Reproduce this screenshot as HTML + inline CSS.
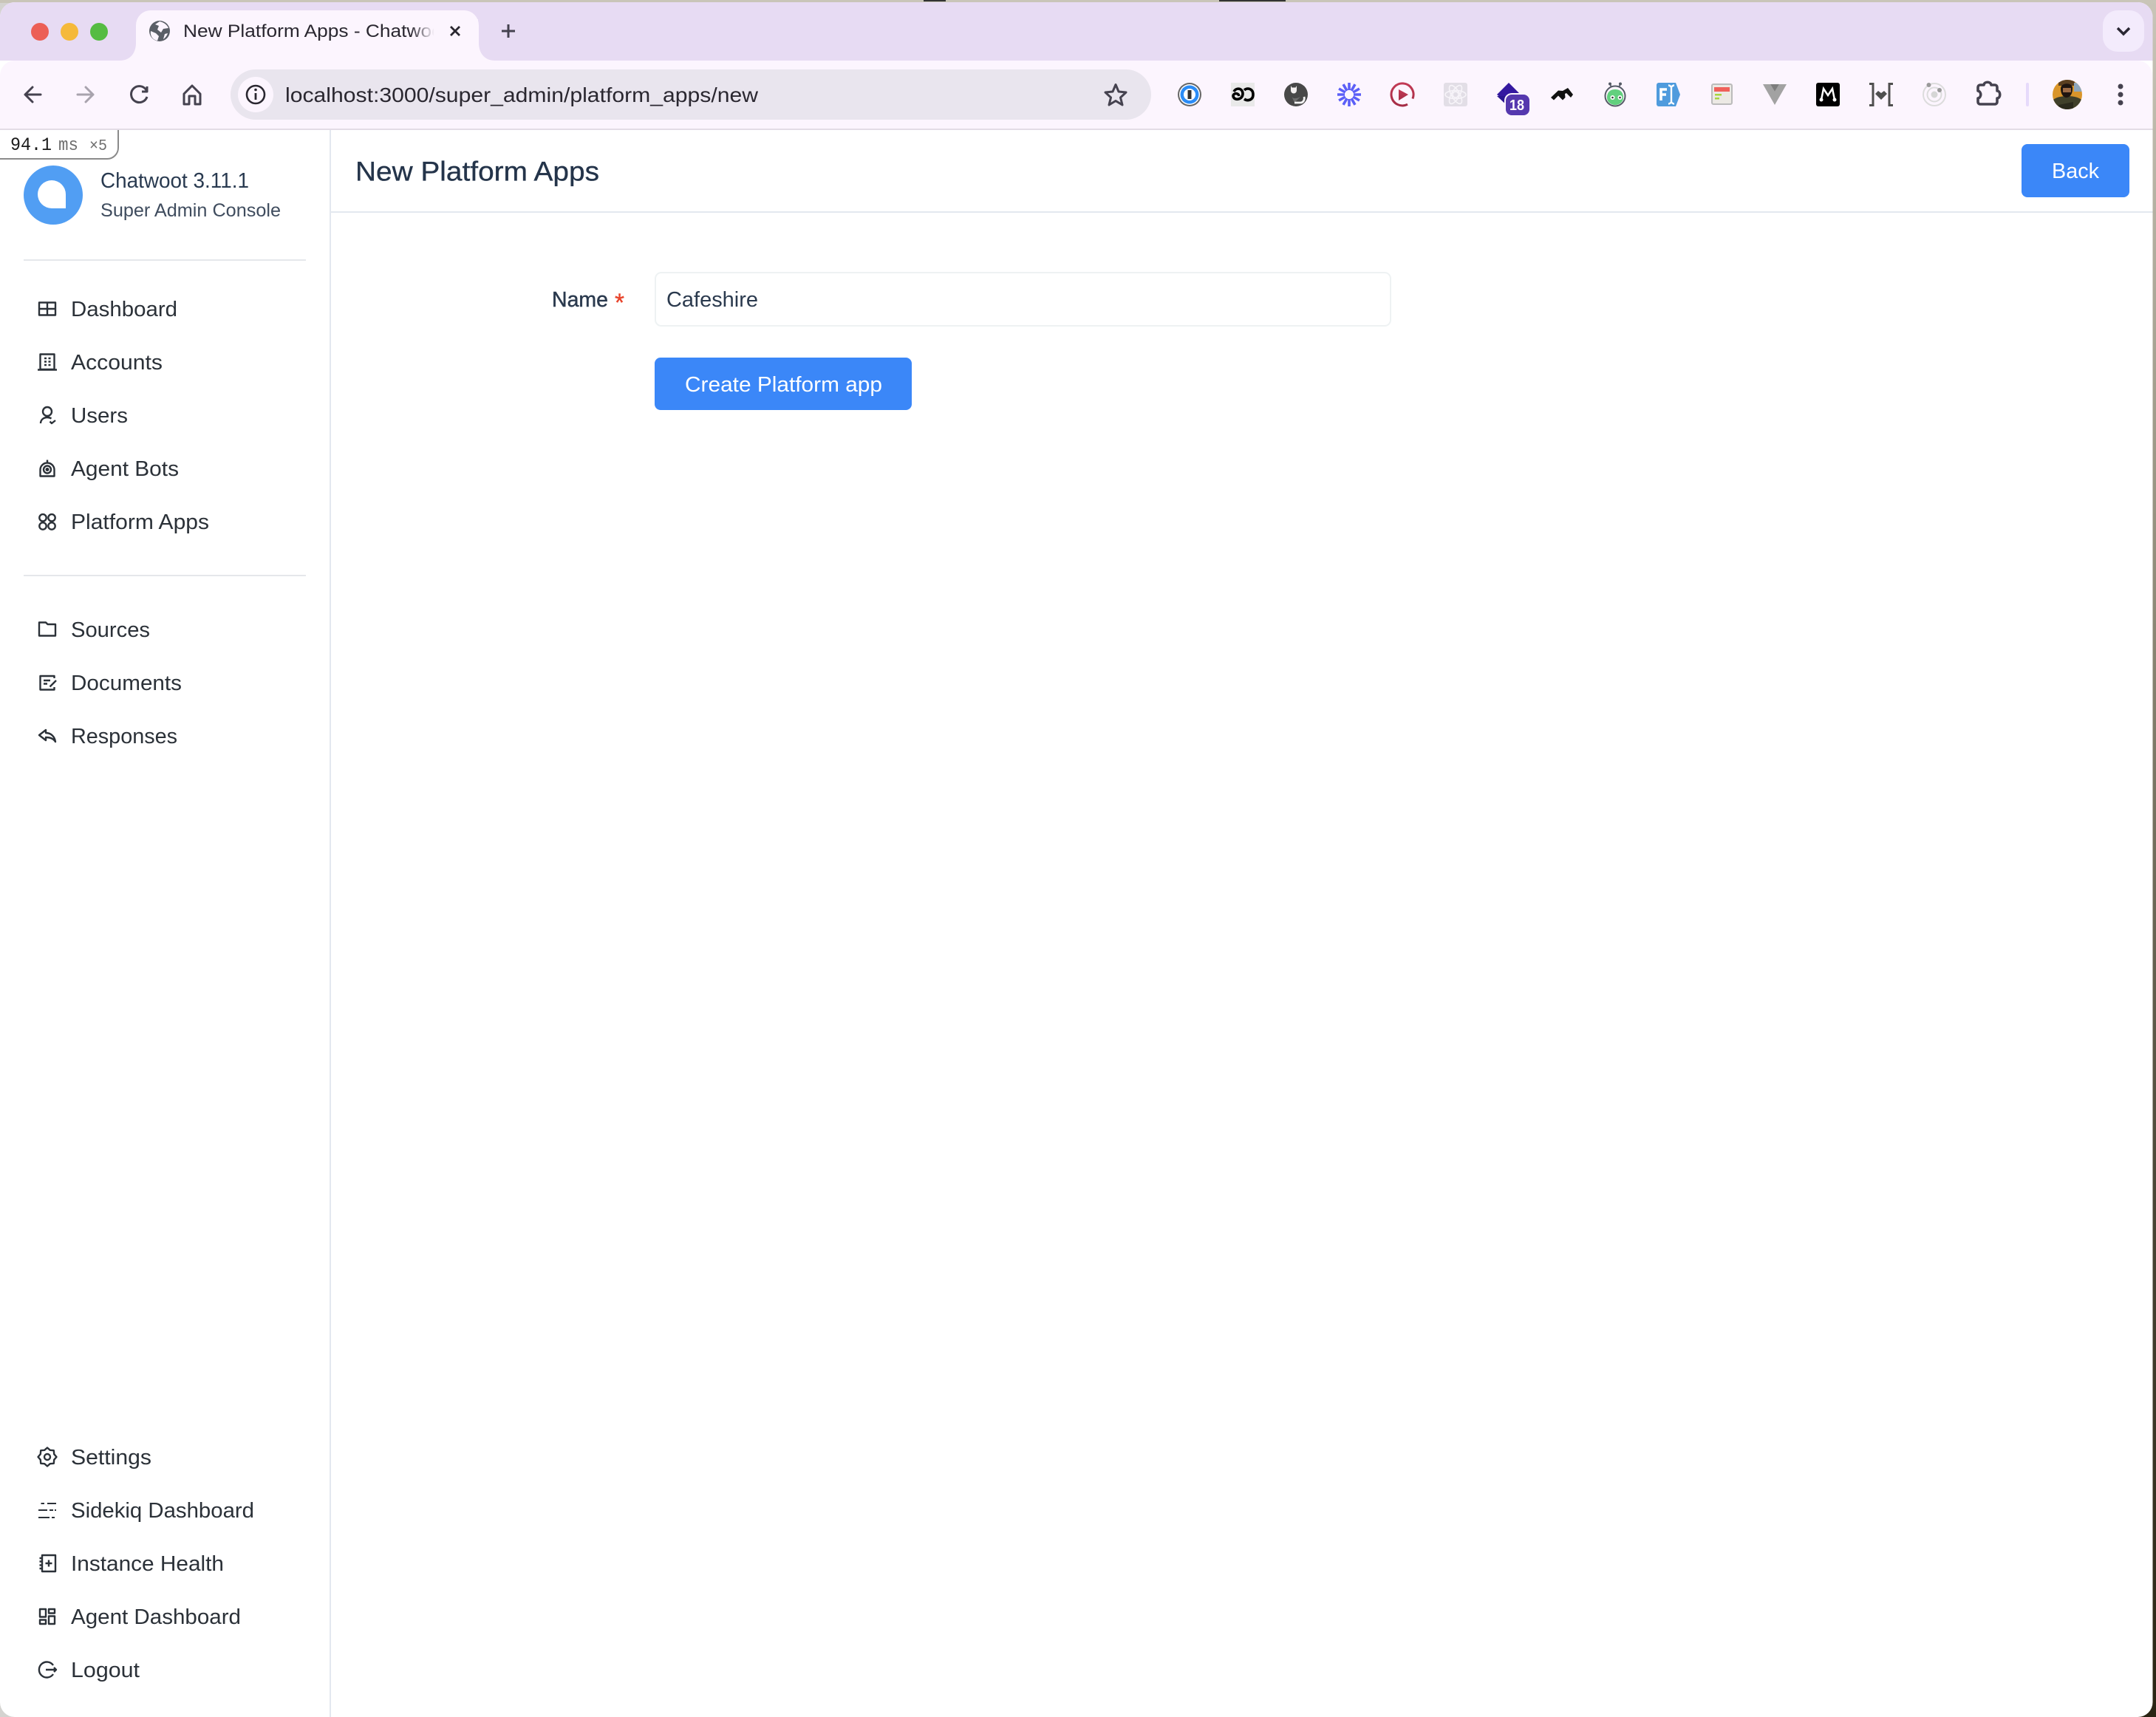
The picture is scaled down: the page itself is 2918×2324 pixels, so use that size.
<!DOCTYPE html>
<html lang="en">
<head>
<meta charset="utf-8">
<title>New Platform Apps - Chatwoot</title>
<style>
html,body{margin:0;padding:0;background:#fff}
svg{display:block}
text{font-family:"Liberation Sans",Arial,sans-serif}
.nav{font-size:29px;fill:#2b3138}
.ic{fill:none;stroke:#2b3138;stroke-width:2.400;stroke-linejoin:round}
.tb{fill:none;stroke:#45424f;stroke-width:3;stroke-linecap:round;stroke-linejoin:round}
.mono{font-family:"Liberation Mono",monospace}
</style>
</head>
<body>
<svg xmlns="http://www.w3.org/2000/svg" width="2918" height="2324" viewBox="0 0 2918 2324">
<defs>
<linearGradient id="strip" x1="0" y1="0" x2="0" y2="1">
<stop offset="0" stop-color="#c9c5b8"/><stop offset=".35" stop-color="#8f8a78"/><stop offset=".7" stop-color="#4a4535"/><stop offset="1" stop-color="#2a2413"/>
</linearGradient>
<linearGradient id="fade" x1="0" y1="0" x2="1" y2="0">
<stop offset="0" stop-color="#fcf5fe" stop-opacity="0"/><stop offset="1" stop-color="#fcf5fe"/>
</linearGradient>
<linearGradient id="playg" x1="0" y1="0" x2="0" y2="1">
<stop offset="0" stop-color="#c23a55"/><stop offset="1" stop-color="#a52c45"/>
</linearGradient>
<clipPath id="av"><circle cx="2798" cy="128" r="20"/></clipPath>
<clipPath id="win"><rect x="0" y="3" width="2913.500" height="2321" rx="20"/></clipPath>
</defs>

<!-- desktop behind window -->
<rect width="2918" height="2324" fill="#d4d3d0"/>
<rect x="2700" width="218" height="2324" fill="url(#strip)"/>
<rect width="2918" height="4" fill="#c9c5b8"/>
<rect x="1250" width="30" height="2" fill="#333"/>
<rect x="1650" width="90" height="2" fill="#333"/>

<g clip-path="url(#win)">
<rect width="2918" height="2324" fill="#fff"/>

<!-- tab strip -->
<rect width="2918" height="82" fill="#e7dbf3"/>
<circle cx="54" cy="43" r="12" fill="#ec5f55"/>
<circle cx="94" cy="43" r="12" fill="#f5b93a"/>
<circle cx="134" cy="43" r="12" fill="#55bc42"/>

<!-- toolbar -->
<path d="M0 174V102a20 20 0 0 1 20-20H2893a20 20 0 0 1 20 20V174Z" fill="#fcf5fe"/>
<rect y="174" width="2918" height="2" fill="#e3dce6"/>

<!-- active tab -->
<path d="M162 82C176 82 184 72 184 58V34a20 20 0 0 1 20-20H628a20 20 0 0 1 20 20V58C648 72 656 82 670 82Z" fill="#fcf5fe"/>
<circle cx="216" cy="42" r="14" fill="#5a5e66"/>
<path d="M216 29c5 1 10 4 12 9l-7 1-3 5-5-4 2-5-5-2ZM204 42l7 3 4 4-2 6c-6-1-10-6-9-13ZM223 46l4-1c-1 3-3 6-6 8Z" fill="#fcf5fe"/>
<text x="248" y="50" font-size="24" fill="#2a2730" textLength="358" lengthAdjust="spacingAndGlyphs">New Platform Apps - Chatwoot</text>
<rect x="556" y="26" width="32" height="32" fill="url(#fade)"/>
<rect x="587" y="26" width="60" height="32" fill="#fcf5fe"/>
<path d="M610 36L622 48M622 36L610 48" fill="none" stroke="#2a2730" stroke-width="2.800"/>
<path d="M688 33V51M679 42H697" fill="none" stroke="#45424f" stroke-width="3"/>

<!-- tab search chevron -->
<rect x="2846" y="14" width="56" height="56" rx="20" fill="#f3ebfc"/>
<path d="M2866 38L2874 46L2882 38" fill="none" stroke="#2a2733" stroke-width="3.500"/>

<!-- nav buttons -->
<path class="tb" d="M55 128H34M44 118L34 128L44 138"/>
<path class="tb" d="M105 128H126M116 118L126 128L116 138" style="stroke:#a8a3ad"/>
<path class="tb" d="M198 122A11 11 0 1 0 199 131M199 117V124H192" style="stroke-linecap:butt"/>
<path class="tb" d="M249 127L260 116L271 127V141H264V130H256V141H249Z"/>

<!-- omnibox -->
<rect x="312" y="94" width="1246" height="68" rx="34" fill="#e9e5ee"/>
<circle cx="346" cy="128" r="24" fill="#fcf5fe"/>
<circle cx="346" cy="128" r="12" fill="none" stroke="#2a2730" stroke-width="2.600"/>
<path d="M346 126V135" stroke="#2a2730" stroke-width="2.800"/>
<circle cx="346" cy="121.500" r="1.800" fill="#2a2730"/>
<text x="386" y="138" font-size="28" fill="#2a2730" textLength="640" lengthAdjust="spacingAndGlyphs">localhost:3000/super_admin/platform_apps/new</text>
<path class="tb" d="M1510 114.500L1514 124L1524 125L1516.500 132L1519 142L1510 136.500L1501 142L1503.500 132L1496 125L1506 124Z"/>

<!-- extensions -->
<circle cx="1610" cy="128" r="16" fill="#666"/><circle cx="1610" cy="128" r="14" fill="#fff"/><circle cx="1610" cy="128" r="12.500" fill="#2b8cf6"/><circle cx="1610" cy="128" r="8" fill="#fff"/><rect x="1607.500" y="122" width="5" height="12" fill="#333"/>

<rect x="1666" y="112" width="32" height="32" fill="#e9e9e9"/>
<path d="M1670 124C1673 118 1682 119 1682 127C1682 135 1670 137 1669 130C1669 126 1676 125 1677 130M1684 122C1688 118 1696 120 1696 128C1696 136 1688 137 1684 134" fill="none" stroke="#000" stroke-width="3.600"/>

<circle cx="1754" cy="128" r="16" fill="#484848"/>
<path d="M1747 116l1.500 2.500h5l1.500-2.500v6c0 3-2 4.500-4 4.500s-4-1.500-4-4.500Z" fill="#f4f0f0"/>
<path d="M1748 130C1750 135 1756 133 1760 131L1752 139Z" fill="#6e6e6e"/>
<path d="M1752 139H1760C1764 139 1766 135 1765 131" fill="none" stroke="#f4f4f4" stroke-width="2.800"/>

<g stroke="#5b5ff7" stroke-width="3.600" fill="none"><path d="M1826 112V122M1826 134V144M1810 128H1820M1832 128H1842M1831.200 125L1839.900 120M1820.800 131L1812.100 136M1831.200 131L1839.900 136M1820.800 125L1812.100 120M1829 122.800L1834 114.100M1823 133.200L1818 141.900M1829 133.200L1834 141.900M1823 122.800L1818 114.100"/></g>

<path d="M1905 141.200A15 15 0 1 1 1911.900 133.600" fill="none" stroke="url(#playg)" stroke-width="3"/>
<path d="M1893 121L1906 128L1893 136Z" fill="url(#playg)"/>

<rect x="1954" y="112" width="32" height="32" rx="3" fill="#e2dee6"/>
<g fill="none" stroke="#f7f4f9" stroke-width="1.600"><ellipse cx="1970" cy="128" rx="14" ry="5.500"/><ellipse cx="1970" cy="128" rx="14" ry="5.500" transform="rotate(60 1970 128)"/><ellipse cx="1970" cy="128" rx="14" ry="5.500" transform="rotate(120 1970 128)"/><circle cx="1970" cy="128" r="4"/></g>

<path d="M2026 128L2042 112L2058 128L2042 141Z" fill="#3418a0"/>
<path d="M2026 130H2040V143Z" fill="#2a1590"/>
<rect x="2036" y="126" width="36" height="32" rx="10" fill="#fcf5fe"/>
<rect x="2038" y="128" width="32" height="28" rx="8" fill="#5538ae"/>
<text x="2043" y="149" font-size="20" font-weight="700" fill="#fff" textLength="20" lengthAdjust="spacingAndGlyphs">18</text>

<path d="M2099 132L2109 122.500L2115 123L2122 119L2129 128L2126 132L2120 126L2118 127L2118.500 132L2115 135.500L2109 129.500L2103 135.500Z" fill="#111"/>

<circle cx="2186" cy="130" r="13.500" fill="#fcf5fe" stroke="#555a66" stroke-width="2"/>
<path d="M2175 132C2175 124 2180 121 2186 121C2192 121 2197 124 2197 132C2197 138 2192 142 2186 142C2180 142 2175 138 2175 132Z" fill="#62d07e"/>
<path d="M2181 118L2179 114M2191 118L2193 114" stroke="#555a66" stroke-width="1.800"/>
<circle cx="2179" cy="113.500" r="2" fill="#555a66"/><circle cx="2193" cy="113.500" r="2" fill="#555a66"/>
<circle cx="2182.500" cy="132" r="3" fill="#fff"/><circle cx="2192.500" cy="132" r="3" fill="#fff"/><circle cx="2182.500" cy="132" r="1.300" fill="#333"/><circle cx="2192.500" cy="132" r="1.300" fill="#333"/>

<path d="M2245 112H2268L2274 128L2268 144H2245a3 3 0 0 1-3-3V115a3 3 0 0 1 3-3Z" fill="#4f9bdd"/>
<path d="M2248 136V121H2256M2248 128H2255" fill="none" stroke="#fff" stroke-width="3.600"/>
<path d="M2262 118V138M2258 115.500c2 0 3 1 4 2.500c1-1.500 2-2.500 4-2.500M2258 140.500c2 0 3-1 4-2.500c1 1.500 2 2.500 4 2.500" fill="none" stroke="#fff" stroke-width="2.400"/>

<rect x="2317" y="114" width="27" height="27" rx="2" fill="#ece9e4" stroke="#bbb" stroke-width="2"/>
<rect x="2320" y="118" width="21" height="6" fill="#f0605a"/>
<rect x="2321" y="127" width="9" height="2.500" fill="#a8d440"/><rect x="2321" y="132" width="6" height="2.500" fill="#a8d440"/>

<path d="M2386 114H2396L2402 124L2408 114H2418L2402 142Z" fill="#a2a2a2"/>
<path d="M2396 114H2402H2408L2402 124Z" fill="#7d7d7d"/>

<rect x="2458" y="112" width="32" height="32" rx="3" fill="#000"/>
<path d="M2465 135L2468 120L2474 129L2480 120L2483 135" fill="none" stroke="#fff" stroke-width="2.500"/>
<circle cx="2465" cy="135" r="2.500" fill="#fff"/><circle cx="2483" cy="135" r="2.500" fill="#fff"/>

<path d="M2530 113.500H2535V142.500H2530M2562 113.500H2557V142.500H2562" fill="none" stroke="#4f4f4f" stroke-width="3"/>
<path d="M2546 135L2538 127L2542 123L2546 126L2550 123L2554 127Z" fill="#4f4f4f"/>

<circle cx="2618" cy="128" r="15" fill="none" stroke="#dcdcdc" stroke-width="2"/>
<circle cx="2618" cy="128" r="9.500" fill="none" stroke="#dcdcdc" stroke-width="2"/>
<circle cx="2618" cy="128" r="4.500" fill="#d6d6d6"/>
<circle cx="2610.500" cy="115" r="3" fill="#999"/><circle cx="2625" cy="122" r="3" fill="#999"/>

<path d="M2680 115H2685C2685.500 110 2694 110 2695 115H2700a3 3 0 0 1 3 3V123C2708 123 2708 133 2703 133V138a3 3 0 0 1-3 3H2680a3 3 0 0 1-3-3V133C2682 132 2682 124 2677 123V118a3 3 0 0 1 3-3Z" fill="none" stroke="#45424f" stroke-width="3.600" stroke-linejoin="round"/>
<rect x="2742" y="112" width="4" height="32" rx="2" fill="#e6dafb"/>

<g clip-path="url(#av)">
<rect x="2778" y="108" width="40" height="40" fill="#d9952a"/>
<rect x="2786" y="108" width="22" height="8" fill="#5a3f20"/>
<rect x="2807" y="112" width="11" height="12" fill="#8fa7bb"/>
<path d="M2778 148V136C2784 128 2812 128 2818 136V148Z" fill="#40402a"/>
<path d="M2789 120C2789 111 2806 111 2805 120C2805 136 2789 136 2789 120Z" fill="#1f1510"/>
<path d="M2792 119H2803V125H2792Z" fill="#9c6a45"/>
<path d="M2786 142L2806 138V148H2786Z" fill="#2b2a1c"/>
</g>
<g fill="#45424f"><circle cx="2870" cy="117" r="3.500"/><circle cx="2870" cy="128" r="3.500"/><circle cx="2870" cy="139" r="3.500"/></g>

<!-- sidebar border and header -->
<rect x="446" y="176" width="2" height="2148" fill="#e3e8ef"/>
<rect x="448" y="286" width="2470" height="2" fill="#e3e8ef"/>

<text x="481" y="244.500" font-size="37" fill="#24344a" stroke="#24344a" stroke-width=".35" textLength="330" lengthAdjust="spacingAndGlyphs">New Platform Apps</text>
<rect x="2736" y="195" width="146" height="72" rx="8" fill="#3b87f8"/>
<text x="2777" y="241" font-size="28.500" fill="#fff" textLength="64" lengthAdjust="spacingAndGlyphs">Back</text>

<!-- perf badge -->
<path d="M0 176H160V200a15 15 0 0 1-15 15H0Z" fill="#fff"/>
<path d="M160 176V200a15 15 0 0 1-15 15H0" fill="none" stroke="#8a8a8a" stroke-width="2"/>
<text class="mono" x="14" y="203" font-size="25" fill="#1a1a1a" textLength="56" lengthAdjust="spacingAndGlyphs">94.1</text>
<text class="mono" x="79" y="203" font-size="24" fill="#6e6e6e" textLength="27" lengthAdjust="spacingAndGlyphs">ms</text>
<text class="mono" x="121" y="203" font-size="21" fill="#6e6e6e" textLength="24" lengthAdjust="spacingAndGlyphs">×5</text>

<!-- logo -->
<circle cx="72" cy="264" r="40" fill="#519ef3"/>
<path d="M70 244a19 19 0 0 1 19 19V282H70a19 19 0 0 1 0-38Z" fill="#fff"/>
<text x="136" y="254" font-size="29" fill="#293a50" textLength="201" lengthAdjust="spacingAndGlyphs">Chatwoot 3.11.1</text>
<text x="136" y="293" font-size="25" fill="#3f4c5e" textLength="244" lengthAdjust="spacingAndGlyphs">Super Admin Console</text>

<rect x="32" y="351" width="382" height="2" fill="#e5e7eb"/>
<rect x="32" y="778" width="382" height="2" fill="#e5e7eb"/>

<!-- nav text -->
<text class="nav" x="96" y="428" textLength="144" lengthAdjust="spacingAndGlyphs">Dashboard</text>
<text class="nav" x="96" y="500" textLength="124" lengthAdjust="spacingAndGlyphs">Accounts</text>
<text class="nav" x="96" y="572" textLength="77" lengthAdjust="spacingAndGlyphs">Users</text>
<text class="nav" x="96" y="644" textLength="146" lengthAdjust="spacingAndGlyphs">Agent Bots</text>
<text class="nav" x="96" y="716" textLength="187" lengthAdjust="spacingAndGlyphs">Platform Apps</text>
<text class="nav" x="96" y="862" textLength="107" lengthAdjust="spacingAndGlyphs">Sources</text>
<text class="nav" x="96" y="934" textLength="150" lengthAdjust="spacingAndGlyphs">Documents</text>
<text class="nav" x="96" y="1006" textLength="144" lengthAdjust="spacingAndGlyphs">Responses</text>
<text class="nav" x="96" y="1982" textLength="109" lengthAdjust="spacingAndGlyphs">Settings</text>
<text class="nav" x="96" y="2054" textLength="248" lengthAdjust="spacingAndGlyphs">Sidekiq Dashboard</text>
<text class="nav" x="96" y="2126" textLength="207" lengthAdjust="spacingAndGlyphs">Instance Health</text>
<text class="nav" x="96" y="2198" textLength="230" lengthAdjust="spacingAndGlyphs">Agent Dashboard</text>
<text class="nav" x="96" y="2270" textLength="93" lengthAdjust="spacingAndGlyphs">Logout</text>

<!-- nav icons (24x24 boxes) -->
<g class="ic" transform="translate(52,406)"><rect x="1" y="3.500" width="22" height="17"/><path d="M12 3.500V20.500M1 12H23"/></g>
<g class="ic" transform="translate(52,478)"><rect x="2.500" y="1.500" width="19" height="20.500"/><path d="M-1 22.500H25M8 7H11M13.500 7H16.500M8 11.500H11M13.500 11.500H16.500M8 16H11M13.500 16H16.500"/></g>
<g class="ic" transform="translate(52,550)"><circle cx="12" cy="7" r="6"/><path d="M3 23c0-5 4-8 9-8 2 0 4 .5 5.500 1.500M15.500 20.500l2.500 2.500 5-4"/></g>
<g class="ic" transform="translate(52,622)"><path d="M2.500 22.500V14a9.500 9.500 0 0 1 19 0V22.500ZM12 .5V4.500"/><circle cx="12" cy="13.500" r="5"/><circle cx="12" cy="13.500" r="1.300" fill="#2b3138"/></g>
<g class="ic" transform="translate(52,694)"><circle cx="6" cy="6.800" r="4.700"/><circle cx="18" cy="6.800" r="4.700"/><circle cx="6" cy="18" r="4.700"/><circle cx="18" cy="18" r="4.700"/></g>
<g class="ic" transform="translate(52,839)"><path d="M1 21.500V3.500H10L12.500 6H23V21.500Z"/></g>
<g class="ic" transform="translate(52,912)"><path d="M21.500 6V3H2.500V21.500H21.500V18M7 9H16M7 13.500H12M24 9L15.500 17.500"/></g>
<g class="ic" transform="translate(52,984)"><path d="M10 4L1 11L10 18V14C15 14 20 15 23 20C22 13 17 8 10 8Z"/></g>
<g class="ic" transform="translate(52,1960)"><path d="M24.500 12L21.200 15.800L20.800 20.800L15.800 21.200L12 24.500L8.200 21.200L3.200 20.800L2.800 15.800L-.5 12L2.800 8.200L3.200 3.200L8.200 2.800L12 -.5L15.800 2.800L20.800 3.200L21.200 8.200Z"/><circle cx="12" cy="12" r="4"/></g>
<g class="ic" transform="translate(52,2032)" style="stroke-width:2"><path d="M3.500 3H8M12 3H24M0 12H12M15 12H20M22 12H24M0 22H15M18 22H22"/></g>
<g class="ic" transform="translate(52,2104)"><path d="M5 1H23V23H5ZM1.500 5H5M1.500 9.500H5M1.500 14.500H5M1.500 19H5M14 7.500V16.500M9.500 12H18.500"/></g>
<g class="ic" transform="translate(52,2176)"><rect x="2" y="2" width="8" height="10.500"/><rect x="14" y="2" width="8" height="5.500"/><rect x="2" y="16.500" width="8" height="5.500"/><rect x="14" y="11.500" width="8" height="10.500"/></g>
<g class="ic" transform="translate(52,2248)"><path d="M20 6A10.500 10.500 0 1 0 20 18M10 12H24M21 9L24 12L21 15"/></g>

<!-- form -->
<text x="747" y="415" font-size="28.500" fill="#2b3a4e" stroke="#2b3a4e" stroke-width=".45" textLength="76" lengthAdjust="spacingAndGlyphs">Name</text>
<text x="832" y="421" font-size="34" fill="#e8452c" stroke="#e8452c" stroke-width=".4" textLength="13" lengthAdjust="spacingAndGlyphs">*</text>
<rect x="887" y="369" width="995" height="72" rx="8" fill="#fff" stroke="#eef2f3" stroke-width="2"/>
<text x="902" y="415" font-size="28.500" fill="#2b3a4e" textLength="124" lengthAdjust="spacingAndGlyphs">Cafeshire</text>
<rect x="886" y="484" width="348" height="71" rx="8" fill="#3b87f8"/>
<text x="927" y="530" font-size="28.500" fill="#fff" textLength="267" lengthAdjust="spacingAndGlyphs">Create Platform app</text>
</g>
</svg>
</body>
</html>
